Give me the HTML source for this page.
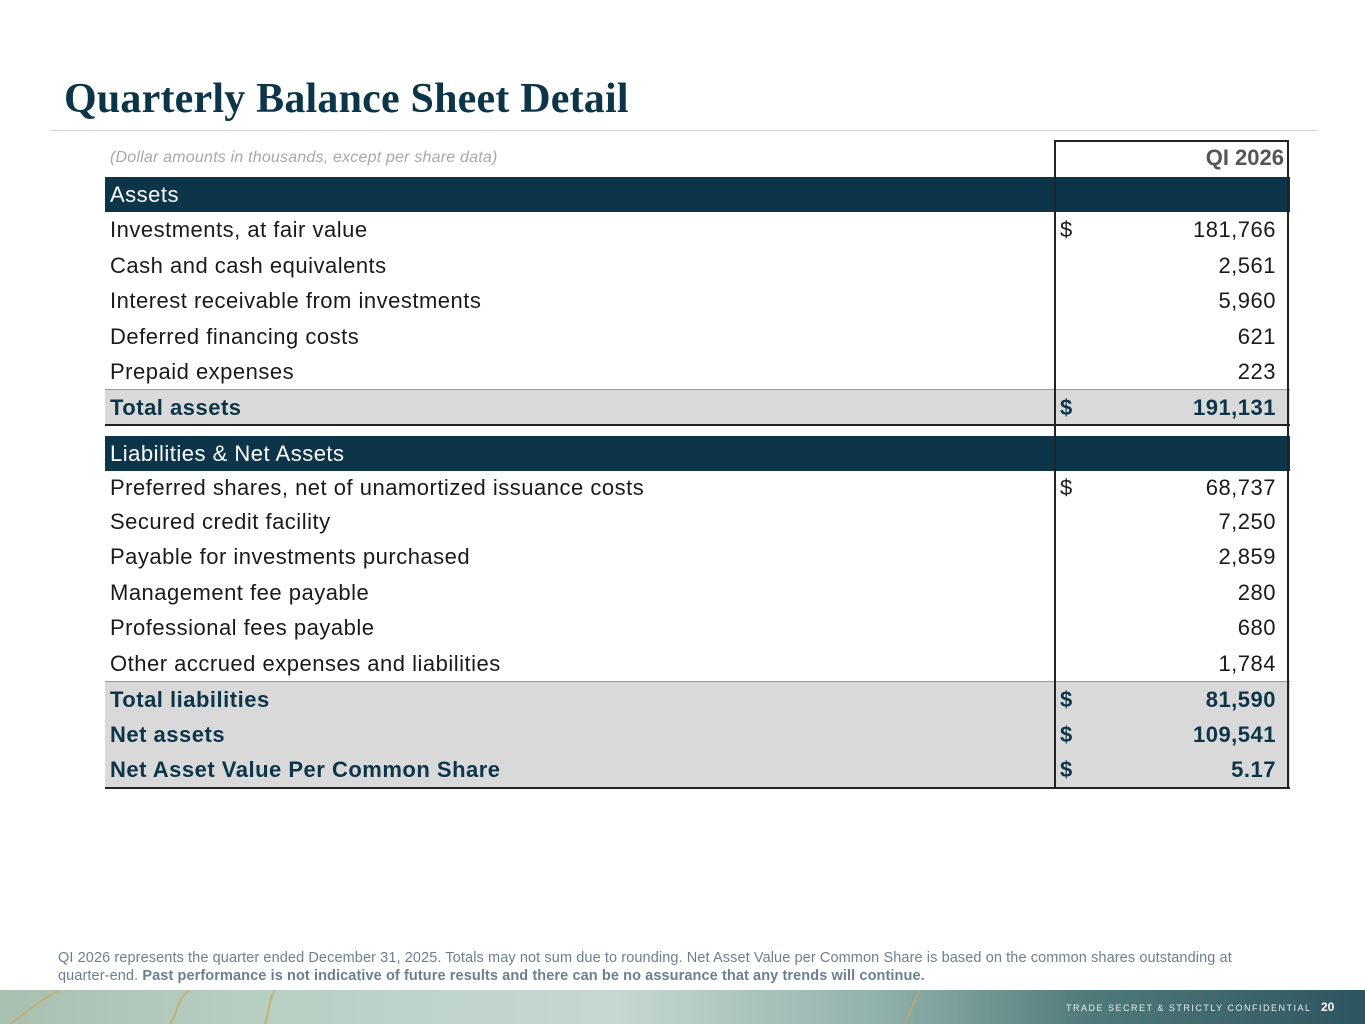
<!DOCTYPE html>
<html><head><meta charset="utf-8"><style>
body{margin:0;width:1365px;height:1024px;position:relative;background:#fff;font-family:"Liberation Sans",sans-serif;overflow:hidden}
.a{position:absolute}
.t{position:absolute;left:64px;top:75px;font:bold 42px "Liberation Serif",serif;color:#0d3549;letter-spacing:0.2px}
.hr{position:absolute;left:50px;top:130px;width:1268px;height:1px;background:#cfd4d8}
.row{position:absolute;left:105px;width:1185px;height:35px;font-size:22px;letter-spacing:0.5px;color:#1a1a1a;line-height:35px}
.row .l{position:absolute;left:5px}
.row .d{position:absolute;left:955px}
.row .v{position:absolute;right:14px}
.bar{background:#0d3549;color:#fff}
.tot{background:#d9d9d9;color:#0d3549;font-weight:bold;border-top:1px solid #999;border-bottom:2px solid #222;box-sizing:border-box}
.box{position:absolute;left:1054px;top:140px;width:235px;height:648px;border:2px solid #222;box-sizing:border-box;border-bottom:none}
</style></head><body>
<div class="t">Quarterly Balance Sheet Detail</div>
<div class="hr"></div>
<div class="a" style="left:110px;top:149px;font-size:16px;font-style:italic;color:#a8a8a8;letter-spacing:0.2px">(Dollar amounts in thousands, except per share data)</div>
<div class="a" style="left:1060px;top:145px;width:224px;text-align:right;font-size:22px;font-weight:bold;color:#555">QI 2026</div>

<div class="row bar" style="top:177px"><span class="l">Assets</span></div>
<div class="row" style="top:212px"><span class="l">Investments, at fair value</span><span class="d">$</span><span class="v">181,766</span></div>
<div class="row" style="top:248px"><span class="l">Cash and cash equivalents</span><span class="v">2,561</span></div>
<div class="row" style="top:283px"><span class="l">Interest receivable from investments</span><span class="v">5,960</span></div>
<div class="row" style="top:319px"><span class="l">Deferred financing costs</span><span class="v">621</span></div>
<div class="row" style="top:354px"><span class="l">Prepaid expenses</span><span class="v">223</span></div>
<div class="row tot" style="top:389px;height:37px"><span class="l">Total assets</span><span class="d">$</span><span class="v">191,131</span></div>

<div class="row bar" style="top:436px"><span class="l">Liabilities &amp; Net Assets</span></div>
<div class="row" style="top:470px"><span class="l">Preferred shares, net of unamortized issuance costs</span><span class="d">$</span><span class="v">68,737</span></div>
<div class="row" style="top:504px"><span class="l">Secured credit facility</span><span class="v">7,250</span></div>
<div class="row" style="top:539px"><span class="l">Payable for investments purchased</span><span class="v">2,859</span></div>
<div class="row" style="top:575px"><span class="l">Management fee payable</span><span class="v">280</span></div>
<div class="row" style="top:610px"><span class="l">Professional fees payable</span><span class="v">680</span></div>
<div class="row" style="top:646px"><span class="l">Other accrued expenses and liabilities</span><span class="v">1,784</span></div>
<div class="row tot" style="top:681px;height:37px;border-bottom:1px solid #777"><span class="l">Total liabilities</span><span class="d">$</span><span class="v">81,590</span></div>
<div class="row tot" style="top:717px;height:36px;border-bottom:1px solid #777;border-top:none"><span class="l">Net assets</span><span class="d">$</span><span class="v">109,541</span></div>
<div class="row tot" style="top:752px;height:37px;border-top:none"><span class="l">Net Asset Value Per Common Share</span><span class="d">$</span><span class="v">5.17</span></div>
<div class="box"></div>

<div class="a" style="left:58px;top:949px;width:1245px;font-size:14.5px;letter-spacing:0.1px;line-height:18px;color:#6b7f93">QI 2026 represents the quarter ended December 31, 2025. Totals may not sum due to rounding. Net Asset Value per Common Share is based on the common shares outstanding at <span style="white-space:nowrap">quarter-end.</span> <b>Past performance is not indicative of future results and there can be no assurance that any trends will continue.</b></div>
<div class="a" style="left:0;top:990px;width:1365px;height:34px;background:linear-gradient(90deg,#a9bfb0 0%,#b8cfc4 20%,#c6d8d0 45%,#8fb0aa 65%,#4f7a7a 80%,#2d5560 100%)"></div>
<svg class="a" style="left:0;top:990px" width="1365" height="34"><path d="M10 34 C30 20 40 10 60 0 M170 34 C180 20 175 10 190 0 M265 34 C270 20 268 10 275 0 M905 34 C910 20 915 10 920 0" stroke="#c9a75a" stroke-width="2" fill="none" opacity=".7"/></svg>
<div class="a" style="left:1066px;top:1003px;font-size:9px;letter-spacing:1.5px;color:#e8eef0">TRADE SECRET &amp; STRICTLY CONFIDENTIAL</div>
<div class="a" style="left:1321px;top:1000px;font-size:12px;font-weight:bold;color:#fff">20</div>
</body></html>
